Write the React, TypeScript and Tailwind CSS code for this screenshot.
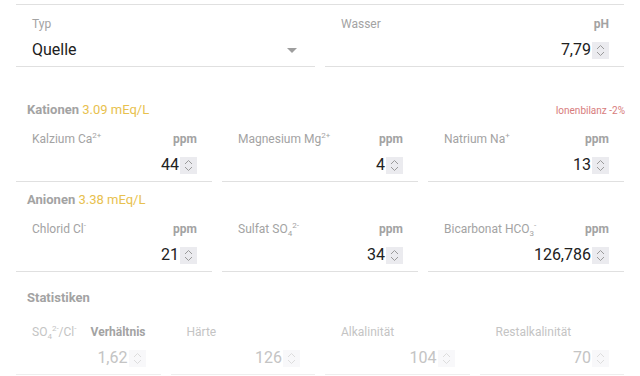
import type { ReactNode } from "react"

// Wasserprofil-Formular

const Spinner = ({ disabled = false }: { disabled?: boolean }) => (
  <div className={`w-[17px] h-[17px] shrink-0 ${disabled ? "bg-[#f8f8fa]" : "bg-[#ebebef]"}`}>
    <svg width="17" height="17" viewBox="0 0 17 17" fill="none">
      <path d="M5 7 L8.5 3.5 L12 7" stroke={disabled ? "#dddddd" : "#9a9a9a"} strokeWidth="1" />
      <path d="M5 10 L8.5 13.5 L12 10" stroke={disabled ? "#dddddd" : "#9a9a9a"} strokeWidth="1" />
    </svg>
  </div>
)

type FieldProps = {
  label: ReactNode
  unit?: string
  value: string
  disabled?: boolean
  top?: string
}

const NumberField = ({ label, unit, value, disabled = false, top = "pt-[11px]" }: FieldProps) => (
  <div className={`${top} pb-[3px] border-b ${disabled ? "border-[#eeeeee]" : "border-[#e0e0e0]"}`}>
    <div className="h-4 flex items-center justify-between pl-4 pr-[15px] text-[12px]">
      <span className={disabled ? "text-[#c4c4c4]" : "text-[#a3a3a3]"}>{label}</span>
      {unit && <span className="font-bold text-[#a3a3a3]">{unit}</span>}
    </div>
    <div className="mt-[5px] h-[26px] flex items-center justify-end pr-[15px]">
      <span className={`text-[16px] mr-[1px] ${disabled ? "text-[#c4c4c4]" : "text-[#212121]"}`}>{value}</span>
      <Spinner disabled={disabled} />
    </div>
  </div>
)

const Header = ({ title, amount, right, mt }: { title: string; amount?: string; right?: string; mt: string }) => (
  <div className={`${mt} h-5 flex items-center justify-between pl-[11px] pr-0`}>
    <div className="text-[13px]">
      <span className="font-bold text-[#a3a3a3]">{title}</span>
      {amount && <span className="text-[#e8c14e]"> {amount}</span>}
    </div>
    {right && <span className="text-[10px] text-[#d77c7c] mr-[-1px]">{right}</span>}
  </div>
)

const sup = "text-[8px] align-super leading-none"
const sub = "text-[8px] align-sub leading-none"

export default function App() {
  return (
    <div className="w-[640px] h-[376px] overflow-hidden bg-white" style={{ fontFamily: "Roboto, 'Liberation Sans', sans-serif" }}>
      <div className="mx-4 mt-1 border-t border-[#e0e0e0]" />
      <div className="mx-4 grid grid-cols-2 gap-[10px]">
        <div className="pt-[11px] pb-[3px] border-b border-[#e0e0e0]">
          <div className="h-4 flex items-center pl-4 text-[12px] text-[#a3a3a3]">Typ</div>
          <div className="mt-[5px] h-[26px] flex items-center justify-between pl-4 pr-[18px]">
            <span className="text-[16px] text-[#212121]">Quelle</span>
            <svg width="10" height="5" viewBox="0 0 10 5">
              <path d="M0 0 L10 0 L5 5 Z" fill="#9e9e9e" />
            </svg>
          </div>
        </div>
        <NumberField label="Wasser" unit="pH" value="7,79" />
      </div>

      <div className="mx-4">
        <Header mt="mt-[33px]" title="Kationen" amount="3.09 mEq/L" right="Ionenbilanz -2%" />
        <div className="grid grid-cols-3 gap-[10px]">
          <NumberField label={<>Kalzium Ca<span className={sup}>2+</span></>} unit="ppm" value="44" />
          <NumberField label={<>Magnesium Mg<span className={sup}>2+</span></>} unit="ppm" value="4" />
          <NumberField label={<>Natrium Na<span className={sup}>+</span></>} unit="ppm" value="13" />
        </div>

        <Header mt="mt-[8px]" title="Anionen" amount="3.38 mEq/L" />
        <div className="grid grid-cols-3 gap-[10px]">
          <NumberField label={<>Chlorid Cl<span className={sup}>-</span></>} unit="ppm" value="21" />
          <NumberField label={<>Sulfat SO<span className={sub}>4</span><span className={sup}>2-</span></>} unit="ppm" value="34" />
          <NumberField label={<>Bicarbonat HCO<span className={sub}>3</span><span className={sup}>-</span></>} unit="ppm" value="126,786" />
        </div>

        <Header mt="mt-[16px]" title="Statistiken" />
        <div className="grid grid-cols-4 gap-[10px]">
          <NumberField
            top="pt-[16px]"
            disabled
            label={<>SO<span className={sub}>4</span><span className={sup}>2-</span>/Cl<span className={sup}>-</span></>}
            unit="Verhältnis"
            value="1,62"
          />
          <NumberField top="pt-[16px]" disabled label="Härte" value="126" />
          <NumberField top="pt-[16px]" disabled label="Alkalinität" value="104" />
          <NumberField top="pt-[16px]" disabled label="Restalkalinität" value="70" />
        </div>
      </div>
    </div>
  )
}
